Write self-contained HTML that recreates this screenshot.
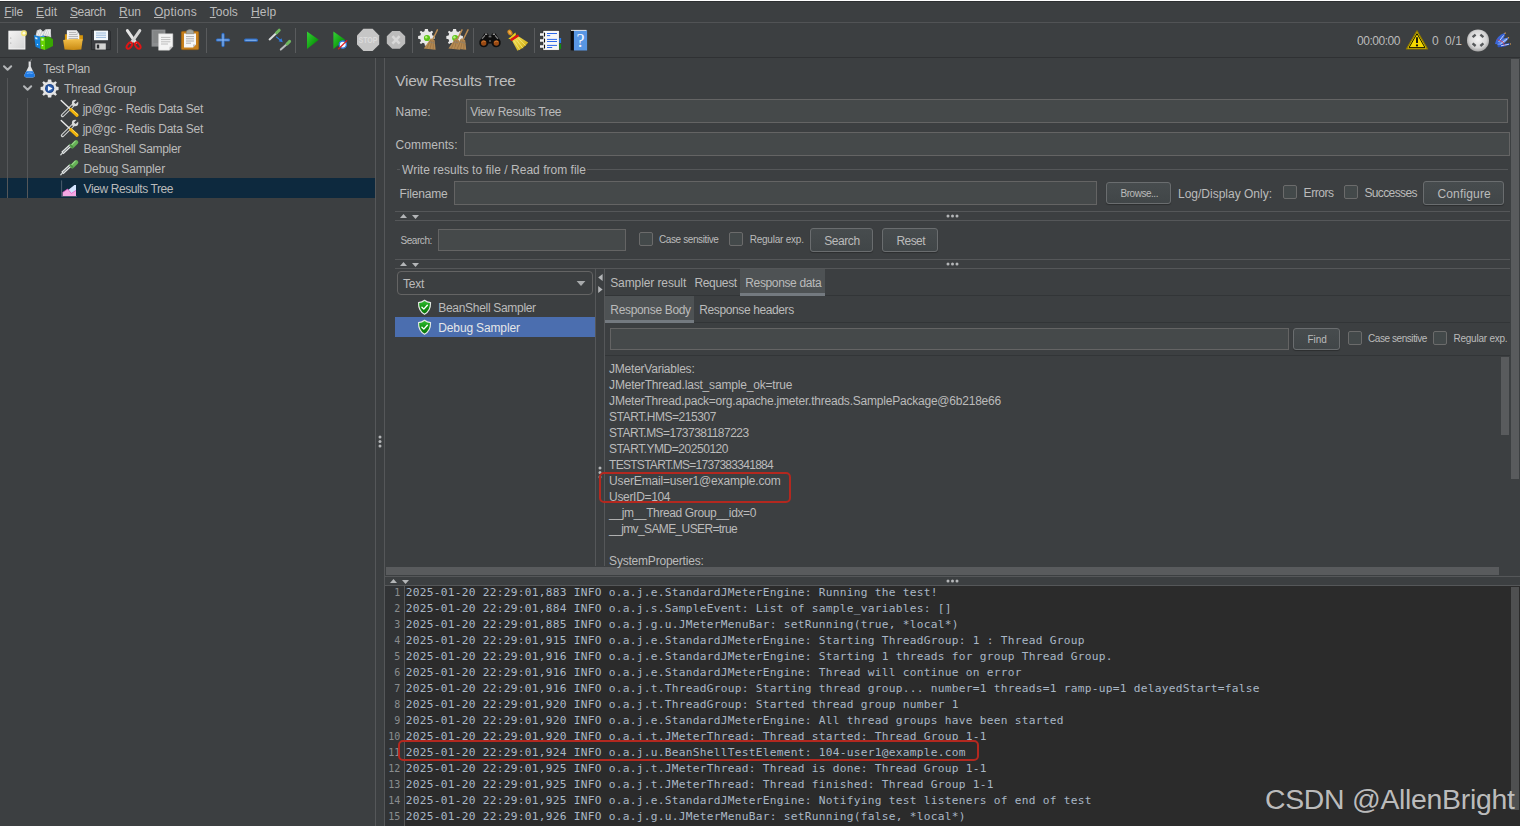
<!DOCTYPE html>
<html lang="en"><head><meta charset="utf-8"><title>Apache JMeter - View Results Tree</title>
<style>
html,body{margin:0;padding:0;}
body{width:1520px;height:826px;overflow:hidden;position:relative;background:#3c3f41;color:#bbbbbb;font-family:"Liberation Sans",sans-serif;font-size:12px;}
.a{position:absolute;}
.t{position:absolute;white-space:pre;line-height:1;}
.t u{text-decoration:underline;text-underline-offset:1px;}
svg{position:absolute;overflow:visible;}

</style></head>
<body>
<div class="a" style="left:0px;top:0px;width:1520px;height:1px;background:#ffffff;"></div>
<div class="a" style="left:0px;top:1px;width:1520px;height:1px;background:#2d2f31;"></div>
<div class="a" style="left:0px;top:22px;width:1520px;height:1px;background:#515355;"></div>
<div class="a" style="left:0px;top:57px;width:1520px;height:1px;background:#2f3133;"></div>
<div class="a" style="left:117px;top:28px;width:1px;height:25px;background:#595b5d;"></div>
<div class="a" style="left:206px;top:28px;width:1px;height:25px;background:#595b5d;"></div>
<div class="a" style="left:295px;top:28px;width:1px;height:25px;background:#595b5d;"></div>
<div class="a" style="left:412px;top:28px;width:1px;height:25px;background:#595b5d;"></div>
<div class="a" style="left:473px;top:28px;width:1px;height:25px;background:#595b5d;"></div>
<div class="a" style="left:534px;top:28px;width:1px;height:25px;background:#595b5d;"></div>
<!--ICONS-->
<div class="a" style="left:375px;top:58px;width:1px;height:768px;background:#555759;"></div>
<div class="a" style="left:384px;top:58px;width:1px;height:768px;background:#555759;"></div>
<div class="a" style="left:0px;top:178px;width:375px;height:20px;background:#0d293e;"></div>
<div class="a" style="left:7px;top:78px;width:1px;height:120px;background:#555759;"></div>
<div class="a" style="left:27px;top:98px;width:1px;height:100px;background:#555759;"></div>
<div class="a" style="left:466px;top:99px;width:1042px;height:24px;background:#45494a;border:1px solid #646464;box-sizing:border-box;"></div>
<div class="a" style="left:464px;top:132px;width:1046px;height:24px;background:#45494a;border:1px solid #646464;box-sizing:border-box;"></div>
<div class="a" style="left:397px;top:169px;width:3px;height:1px;background:#555759;"></div>
<div class="a" style="left:587px;top:169px;width:921px;height:1px;background:#555759;"></div>
<div class="a" style="left:454px;top:181px;width:643px;height:24px;background:#45494a;border:1px solid #646464;box-sizing:border-box;"></div>
<div class="a" style="left:1106px;top:182px;width:65px;height:22px;background:linear-gradient(#474c4e,#414648);border:1px solid #6a6d6f;box-sizing:border-box;border-radius:3px;box-shadow:0 1px 1px rgba(0,0,0,0.28);"></div>
<div class="a" style="left:1283px;top:185px;width:14px;height:14px;background:#43494a;border:1px solid #6b6b6b;box-sizing:border-box;border-radius:2px;"></div>
<div class="a" style="left:1344px;top:185px;width:14px;height:14px;background:#43494a;border:1px solid #6b6b6b;box-sizing:border-box;border-radius:2px;"></div>
<div class="a" style="left:1423px;top:181px;width:81px;height:24px;background:linear-gradient(#474c4e,#414648);border:1px solid #6a6d6f;box-sizing:border-box;border-radius:3px;box-shadow:0 1px 1px rgba(0,0,0,0.28);"></div>
<div class="a" style="left:1511px;top:59px;width:8px;height:420px;background:#595b5d;"></div>
<div class="a" style="left:395px;top:211px;width:1115px;height:1px;background:#555759;"></div>
<div class="a" style="left:395px;top:220px;width:1115px;height:1px;background:#555759;"></div>
<!--ARROWS1-->
<div class="a" style="left:438px;top:229px;width:188px;height:22px;background:#45494a;border:1px solid #646464;box-sizing:border-box;"></div>
<div class="a" style="left:639px;top:232px;width:14px;height:14px;background:#43494a;border:1px solid #6b6b6b;box-sizing:border-box;border-radius:2px;"></div>
<div class="a" style="left:729px;top:232px;width:14px;height:14px;background:#43494a;border:1px solid #6b6b6b;box-sizing:border-box;border-radius:2px;"></div>
<div class="a" style="left:810px;top:228px;width:63px;height:24px;background:linear-gradient(#474c4e,#414648);border:1px solid #6a6d6f;box-sizing:border-box;border-radius:3px;box-shadow:0 1px 1px rgba(0,0,0,0.28);"></div>
<div class="a" style="left:882px;top:228px;width:56px;height:24px;background:linear-gradient(#474c4e,#414648);border:1px solid #6a6d6f;box-sizing:border-box;border-radius:3px;box-shadow:0 1px 1px rgba(0,0,0,0.28);"></div>
<div class="a" style="left:395px;top:259px;width:1115px;height:1px;background:#555759;"></div>
<div class="a" style="left:395px;top:268px;width:1115px;height:1px;background:#555759;"></div>
<div class="a" style="left:397px;top:271px;width:196px;height:24px;border:1px solid #646464;box-sizing:border-box;border-radius:4px;"></div>
<div class="a" style="left:395px;top:317px;width:200px;height:20px;background:#4b6eaf;"></div>
<div class="a" style="left:595px;top:269px;width:1px;height:298px;background:#555759;"></div>
<div class="a" style="left:604px;top:269px;width:1px;height:298px;background:#555759;"></div>
<div class="a" style="left:740px;top:269px;width:85px;height:27px;background:#4e5254;"></div>
<div class="a" style="left:740px;top:293px;width:85px;height:3px;background:#747a80;"></div>
<div class="a" style="left:605px;top:295px;width:135px;height:1px;background:#323537;"></div>
<div class="a" style="left:825px;top:295px;width:685px;height:1px;background:#323537;"></div>
<div class="a" style="left:605px;top:296px;width:89px;height:27px;background:#4e5254;"></div>
<div class="a" style="left:605px;top:320px;width:89px;height:3px;background:#747a80;"></div>
<div class="a" style="left:694px;top:322px;width:816px;height:1px;background:#323537;"></div>
<div class="a" style="left:610px;top:328px;width:679px;height:22px;background:#45494a;border:1px solid #646464;box-sizing:border-box;"></div>
<div class="a" style="left:1293px;top:328px;width:47px;height:22px;background:linear-gradient(#474c4e,#414648);border:1px solid #6a6d6f;box-sizing:border-box;border-radius:3px;box-shadow:0 1px 1px rgba(0,0,0,0.28);"></div>
<div class="a" style="left:1348px;top:331px;width:14px;height:14px;background:#43494a;border:1px solid #6b6b6b;box-sizing:border-box;border-radius:2px;"></div>
<div class="a" style="left:1433px;top:331px;width:14px;height:14px;background:#43494a;border:1px solid #6b6b6b;box-sizing:border-box;border-radius:2px;"></div>
<div class="a" style="left:605px;top:355px;width:905px;height:1px;background:#323537;"></div>
<div class="a" style="left:1501px;top:357px;width:8px;height:78px;background:#595b5d;"></div>
<div class="a" style="left:385px;top:566px;width:1135px;height:10px;background:#3c3f41;"></div>
<div class="a" style="left:386px;top:567px;width:1113px;height:8px;background:#595b5d;"></div>
<div class="a" style="left:384px;top:566px;width:1px;height:20px;background:#555759;"></div>
<div class="a" style="left:599px;top:472px;width:191.5px;height:31px;border:2px solid #b3281f;border-radius:5px;box-sizing:border-box;z-index:5;"></div>
<div class="a" style="left:385px;top:576px;width:1135px;height:1px;background:#555759;"></div>
<div class="a" style="left:385px;top:585px;width:1135px;height:1px;background:#555759;"></div>
<div class="a" style="left:385px;top:586px;width:1135px;height:240px;background:#2b2b2b;"></div>
<div class="a" style="left:385px;top:586px;width:20px;height:240px;background:#313335;"></div>
<div class="a" style="left:404px;top:586px;width:1px;height:240px;background:#555555;"></div>
<div class="a" style="left:1511px;top:587px;width:8px;height:223px;background:#4f5051;"></div>
<div class="a" style="left:398px;top:740.4px;width:581.2px;height:20.4px;border:2px solid #b3281f;border-radius:5px;box-sizing:border-box;z-index:5;"></div>
<span class="t " style="left:4.3px;top:6.00px;font-size:12px;letter-spacing:-0.140px;"><u>F</u>ile</span>
<span class="t " style="left:36.1px;top:6.00px;font-size:12px;letter-spacing:0.099px;"><u>E</u>dit</span>
<span class="t " style="left:70px;top:6.00px;font-size:12px;letter-spacing:-0.405px;"><u>S</u>earch</span>
<span class="t " style="left:119px;top:6.00px;font-size:12px;letter-spacing:-0.010px;"><u>R</u>un</span>
<span class="t " style="left:154px;top:6.00px;font-size:12px;letter-spacing:0.232px;"><u>O</u>ptions</span>
<span class="t " style="left:209.8px;top:6.00px;font-size:12px;letter-spacing:-0.003px;"><u>T</u>ools</span>
<span class="t " style="left:251px;top:6.00px;font-size:12px;letter-spacing:0.153px;"><u>H</u>elp</span>
<span class="t " style="left:1357px;top:35.00px;font-size:12px;letter-spacing:-0.465px;">00:00:00</span>
<span class="t " style="left:1432px;top:35.00px;font-size:12px;letter-spacing:0.312px;">0</span>
<span class="t " style="left:1445px;top:35.00px;font-size:12px;letter-spacing:0.104px;">0/1</span>
<span class="t " style="left:43.2px;top:63.00px;font-size:12px;letter-spacing:-0.284px;">Test Plan</span>
<span class="t " style="left:64px;top:83.00px;font-size:12px;letter-spacing:-0.227px;">Thread Group</span>
<span class="t " style="left:82.7px;top:103.00px;font-size:12px;letter-spacing:-0.240px;">jp@gc - Redis Data Set</span>
<span class="t " style="left:82.7px;top:123.00px;font-size:12px;letter-spacing:-0.240px;">jp@gc - Redis Data Set</span>
<span class="t " style="left:83.6px;top:143.00px;font-size:12px;letter-spacing:-0.314px;">BeanShell Sampler</span>
<span class="t " style="left:83.6px;top:163.00px;font-size:12px;letter-spacing:-0.153px;">Debug Sampler</span>
<span class="t " style="left:83.6px;top:183.00px;font-size:12px;letter-spacing:-0.418px;">View Results Tree</span>
<span class="t " style="left:395.2px;top:73.00px;font-size:15.5px;letter-spacing:-0.244px;">View Results Tree</span>
<span class="t " style="left:395.6px;top:106.00px;font-size:12px;letter-spacing:-0.069px;">Name:</span>
<span class="t " style="left:470.2px;top:106.00px;font-size:12px;letter-spacing:-0.324px;">View Results Tree</span>
<span class="t " style="left:395.6px;top:139.00px;font-size:12px;letter-spacing:0.071px;">Comments:</span>
<span class="t " style="left:402px;top:164.00px;font-size:12px;letter-spacing:0.022px;">Write results to file / Read from file</span>
<span class="t " style="left:399.6px;top:188.00px;font-size:12px;letter-spacing:-0.170px;">Filename</span>
<span class="t " style="left:1120.5px;top:189.00px;font-size:10px;letter-spacing:-0.465px;">Browse...</span>
<span class="t " style="left:1178px;top:188.00px;font-size:12px;letter-spacing:-0.003px;">Log/Display Only:</span>
<span class="t " style="left:1303.6px;top:187.00px;font-size:12px;letter-spacing:-0.445px;">Errors</span>
<span class="t " style="left:1364.4px;top:187.00px;font-size:12px;letter-spacing:-0.615px;">Successes</span>
<span class="t " style="left:1437.4px;top:188.00px;font-size:12px;letter-spacing:0.163px;">Configure</span>
<span class="t " style="left:400.4px;top:236.00px;font-size:10px;letter-spacing:-0.424px;">Search:</span>
<span class="t " style="left:659px;top:235.00px;font-size:10px;letter-spacing:-0.395px;">Case sensitive</span>
<span class="t " style="left:749.7px;top:235.00px;font-size:10px;letter-spacing:-0.225px;">Regular exp.</span>
<span class="t " style="left:824.2px;top:235.00px;font-size:12px;letter-spacing:-0.422px;">Search</span>
<span class="t " style="left:896.5px;top:235.00px;font-size:12px;letter-spacing:-0.572px;">Reset</span>
<span class="t " style="left:403px;top:278.00px;font-size:12px;letter-spacing:-0.254px;">Text</span>
<span class="t " style="left:438.3px;top:302.00px;font-size:12px;letter-spacing:-0.308px;">BeanShell Sampler</span>
<span class="t " style="left:438.3px;top:322.00px;font-size:12px;color:#e4e6e8;letter-spacing:-0.145px;">Debug Sampler</span>
<span class="t " style="left:610.2px;top:277.00px;font-size:12px;letter-spacing:-0.098px;">Sampler result</span>
<span class="t " style="left:694.4px;top:277.00px;font-size:12px;letter-spacing:-0.315px;">Request</span>
<span class="t " style="left:745.3px;top:277.00px;font-size:12px;letter-spacing:-0.364px;">Response data</span>
<span class="t " style="left:610.3px;top:304.00px;font-size:12px;letter-spacing:-0.326px;">Response Body</span>
<span class="t " style="left:699.3px;top:304.00px;font-size:12px;letter-spacing:-0.390px;">Response headers</span>
<span class="t " style="left:1307.6px;top:335.00px;font-size:10px;letter-spacing:-0.113px;">Find</span>
<span class="t " style="left:1368px;top:334.00px;font-size:10px;letter-spacing:-0.431px;">Case sensitive</span>
<span class="t " style="left:1453.4px;top:334.00px;font-size:10px;letter-spacing:-0.225px;">Regular exp.</span>
<span class="t " style="left:609.1px;top:363.00px;font-size:12px;letter-spacing:-0.235px;">JMeterVariables:</span>
<span class="t " style="left:609.1px;top:379.00px;font-size:12px;letter-spacing:-0.187px;">JMeterThread.last_sample_ok=true</span>
<span class="t " style="left:609.1px;top:395.00px;font-size:12px;letter-spacing:-0.215px;">JMeterThread.pack=org.apache.jmeter.threads.SamplePackage@6b218e66</span>
<span class="t " style="left:609.1px;top:411.00px;font-size:12px;letter-spacing:-0.441px;">START.HMS=215307</span>
<span class="t " style="left:609.1px;top:427.00px;font-size:12px;letter-spacing:-0.528px;">START.MS=1737381187223</span>
<span class="t " style="left:609.1px;top:443.00px;font-size:12px;letter-spacing:-0.466px;">START.YMD=20250120</span>
<span class="t " style="left:609.1px;top:459.00px;font-size:12px;letter-spacing:-0.722px;">TESTSTART.MS=1737383341884</span>
<span class="t " style="left:609.1px;top:475.00px;font-size:12px;letter-spacing:-0.160px;">UserEmail=user1@example.com</span>
<span class="t " style="left:609.1px;top:491.00px;font-size:12px;letter-spacing:-0.327px;">UserID=104</span>
<span class="t " style="left:609.1px;top:507.00px;font-size:12px;letter-spacing:-0.382px;">__jm__Thread Group__idx=0</span>
<span class="t " style="left:609.1px;top:523.00px;font-size:12px;letter-spacing:-0.625px;">__jmv_SAME_USER=true</span>
<span class="t " style="left:609.1px;top:555.00px;font-size:12px;letter-spacing:-0.209px;">SystemProperties:</span>
<span class="t " style="left:405.8px;top:587.00px;font-size:11.2px;font-family:'DejaVu Sans Mono','Liberation Mono',monospace;color:#a9b7c6;letter-spacing:0.264px;">2025-01-20 22:29:01,883 INFO o.a.j.e.StandardJMeterEngine: Running the test!</span>
<span class="t " style="left:394.28000000000003px;top:588.00px;font-size:10px;font-family:'DejaVu Sans Mono','Liberation Mono',monospace;color:#8a8d8f;">1</span>
<span class="t " style="left:405.8px;top:603.00px;font-size:11.2px;font-family:'DejaVu Sans Mono','Liberation Mono',monospace;color:#a9b7c6;letter-spacing:0.264px;">2025-01-20 22:29:01,884 INFO o.a.j.s.SampleEvent: List of sample_variables: []</span>
<span class="t " style="left:394.28000000000003px;top:604.00px;font-size:10px;font-family:'DejaVu Sans Mono','Liberation Mono',monospace;color:#8a8d8f;">2</span>
<span class="t " style="left:405.8px;top:619.00px;font-size:11.2px;font-family:'DejaVu Sans Mono','Liberation Mono',monospace;color:#a9b7c6;letter-spacing:0.264px;">2025-01-20 22:29:01,885 INFO o.a.j.g.u.JMeterMenuBar: setRunning(true, *local*)</span>
<span class="t " style="left:394.28000000000003px;top:620.00px;font-size:10px;font-family:'DejaVu Sans Mono','Liberation Mono',monospace;color:#8a8d8f;">3</span>
<span class="t " style="left:405.8px;top:635.00px;font-size:11.2px;font-family:'DejaVu Sans Mono','Liberation Mono',monospace;color:#a9b7c6;letter-spacing:0.264px;">2025-01-20 22:29:01,915 INFO o.a.j.e.StandardJMeterEngine: Starting ThreadGroup: 1 : Thread Group</span>
<span class="t " style="left:394.28000000000003px;top:636.00px;font-size:10px;font-family:'DejaVu Sans Mono','Liberation Mono',monospace;color:#8a8d8f;">4</span>
<span class="t " style="left:405.8px;top:651.00px;font-size:11.2px;font-family:'DejaVu Sans Mono','Liberation Mono',monospace;color:#a9b7c6;letter-spacing:0.265px;">2025-01-20 22:29:01,916 INFO o.a.j.e.StandardJMeterEngine: Starting 1 threads for group Thread Group.</span>
<span class="t " style="left:394.28000000000003px;top:652.00px;font-size:10px;font-family:'DejaVu Sans Mono','Liberation Mono',monospace;color:#8a8d8f;">5</span>
<span class="t " style="left:405.8px;top:667.00px;font-size:11.2px;font-family:'DejaVu Sans Mono','Liberation Mono',monospace;color:#a9b7c6;letter-spacing:0.264px;">2025-01-20 22:29:01,916 INFO o.a.j.e.StandardJMeterEngine: Thread will continue on error</span>
<span class="t " style="left:394.28000000000003px;top:668.00px;font-size:10px;font-family:'DejaVu Sans Mono','Liberation Mono',monospace;color:#8a8d8f;">6</span>
<span class="t " style="left:405.8px;top:683.00px;font-size:11.2px;font-family:'DejaVu Sans Mono','Liberation Mono',monospace;color:#a9b7c6;letter-spacing:0.264px;">2025-01-20 22:29:01,916 INFO o.a.j.t.ThreadGroup: Starting thread group... number=1 threads=1 ramp-up=1 delayedStart=false</span>
<span class="t " style="left:394.28000000000003px;top:684.00px;font-size:10px;font-family:'DejaVu Sans Mono','Liberation Mono',monospace;color:#8a8d8f;">7</span>
<span class="t " style="left:405.8px;top:699.00px;font-size:11.2px;font-family:'DejaVu Sans Mono','Liberation Mono',monospace;color:#a9b7c6;letter-spacing:0.264px;">2025-01-20 22:29:01,920 INFO o.a.j.t.ThreadGroup: Started thread group number 1</span>
<span class="t " style="left:394.28000000000003px;top:700.00px;font-size:10px;font-family:'DejaVu Sans Mono','Liberation Mono',monospace;color:#8a8d8f;">8</span>
<span class="t " style="left:405.8px;top:715.00px;font-size:11.2px;font-family:'DejaVu Sans Mono','Liberation Mono',monospace;color:#a9b7c6;letter-spacing:0.264px;">2025-01-20 22:29:01,920 INFO o.a.j.e.StandardJMeterEngine: All thread groups have been started</span>
<span class="t " style="left:394.28000000000003px;top:716.00px;font-size:10px;font-family:'DejaVu Sans Mono','Liberation Mono',monospace;color:#8a8d8f;">9</span>
<span class="t " style="left:405.8px;top:731.00px;font-size:11.2px;font-family:'DejaVu Sans Mono','Liberation Mono',monospace;color:#a9b7c6;letter-spacing:0.264px;">2025-01-20 22:29:01,920 INFO o.a.j.t.JMeterThread: Thread started: Thread Group 1-1</span>
<span class="t " style="left:388.26px;top:732.00px;font-size:10px;font-family:'DejaVu Sans Mono','Liberation Mono',monospace;color:#8a8d8f;">10</span>
<span class="t " style="left:405.8px;top:747.00px;font-size:11.2px;font-family:'DejaVu Sans Mono','Liberation Mono',monospace;color:#a9b7c6;letter-spacing:0.264px;">2025-01-20 22:29:01,924 INFO o.a.j.u.BeanShellTestElement: 104-user1@example.com</span>
<span class="t " style="left:388.26px;top:748.00px;font-size:10px;font-family:'DejaVu Sans Mono','Liberation Mono',monospace;color:#8a8d8f;">11</span>
<span class="t " style="left:405.8px;top:763.00px;font-size:11.2px;font-family:'DejaVu Sans Mono','Liberation Mono',monospace;color:#a9b7c6;letter-spacing:0.264px;">2025-01-20 22:29:01,925 INFO o.a.j.t.JMeterThread: Thread is done: Thread Group 1-1</span>
<span class="t " style="left:388.26px;top:764.00px;font-size:10px;font-family:'DejaVu Sans Mono','Liberation Mono',monospace;color:#8a8d8f;">12</span>
<span class="t " style="left:405.8px;top:779.00px;font-size:11.2px;font-family:'DejaVu Sans Mono','Liberation Mono',monospace;color:#a9b7c6;letter-spacing:0.265px;">2025-01-20 22:29:01,925 INFO o.a.j.t.JMeterThread: Thread finished: Thread Group 1-1</span>
<span class="t " style="left:388.26px;top:780.00px;font-size:10px;font-family:'DejaVu Sans Mono','Liberation Mono',monospace;color:#8a8d8f;">13</span>
<span class="t " style="left:405.8px;top:795.00px;font-size:11.2px;font-family:'DejaVu Sans Mono','Liberation Mono',monospace;color:#a9b7c6;letter-spacing:0.265px;">2025-01-20 22:29:01,925 INFO o.a.j.e.StandardJMeterEngine: Notifying test listeners of end of test</span>
<span class="t " style="left:388.26px;top:796.00px;font-size:10px;font-family:'DejaVu Sans Mono','Liberation Mono',monospace;color:#8a8d8f;">14</span>
<span class="t " style="left:405.8px;top:811.00px;font-size:11.2px;font-family:'DejaVu Sans Mono','Liberation Mono',monospace;color:#a9b7c6;letter-spacing:0.264px;">2025-01-20 22:29:01,926 INFO o.a.j.g.u.JMeterMenuBar: setRunning(false, *local*)</span>
<span class="t " style="left:388.26px;top:812.00px;font-size:10px;font-family:'DejaVu Sans Mono','Liberation Mono',monospace;color:#8a8d8f;">15</span>
<span class="t wm" style="left:1265px;top:785.00px;font-size:28.4px;color:rgba(208,208,208,0.9);letter-spacing:-0.291px;">CSDN @AllenBright</span>
<svg width="1520" height="826" viewBox="0 0 1520 826" style="left:0;top:0;pointer-events:none">
<defs>
<linearGradient id="gPage" x1="0" y1="0" x2="1" y2="1"><stop offset="0" stop-color="#f4f4f4"/><stop offset="1" stop-color="#d4d4d4"/></linearGradient>
<linearGradient id="gFold" x1="0" y1="0" x2="0" y2="1"><stop offset="0" stop-color="#f3c04a"/><stop offset="1" stop-color="#c98a12"/></linearGradient>
<linearGradient id="gPlay" x1="0" y1="0" x2="1" y2="1"><stop offset="0" stop-color="#35d235"/><stop offset="0.6" stop-color="#12a012"/><stop offset="1" stop-color="#066806"/></linearGradient>
<radialGradient id="gSph" cx="0.5" cy="0.45" r="0.55"><stop offset="0" stop-color="#f4f4f4"/><stop offset="0.7" stop-color="#d6d6d6"/><stop offset="1" stop-color="#a4a4a4"/></radialGradient>
<linearGradient id="gShield" x1="0" y1="0" x2="0" y2="1"><stop offset="0" stop-color="#34c034"/><stop offset="0.5" stop-color="#149414"/><stop offset="1" stop-color="#087008"/></linearGradient>
<linearGradient id="gBlue" x1="0" y1="0" x2="0" y2="1"><stop offset="0" stop-color="#6aa6ee"/><stop offset="1" stop-color="#2d6fca"/></linearGradient>
<radialGradient id="gGearC" cx="0.5" cy="0.5" r="0.5"><stop offset="0" stop-color="#4d86d8"/><stop offset="1" stop-color="#173f86"/></radialGradient>
<linearGradient id="gBroom" x1="0" y1="0" x2="1" y2="1"><stop offset="0" stop-color="#f6e45a"/><stop offset="1" stop-color="#c9a40a"/></linearGradient>
<g id="gear"><path d="M-1.6,-9 L1.6,-9 L2.1,-6.6 L3.9,-5.9 L5.9,-7.3 L7.3,-5.9 L5.9,-3.9 L6.6,-2.1 L9,-1.6 L9,1.6 L6.6,2.1 L5.9,3.9 L7.3,5.9 L5.9,7.3 L3.9,5.9 L2.1,6.6 L1.6,9 L-1.6,9 L-2.1,6.6 L-3.9,5.9 L-5.9,7.3 L-7.3,5.9 L-5.9,3.9 L-6.6,2.1 L-9,1.6 L-9,-1.6 L-6.6,-2.1 L-5.9,-3.9 L-7.3,-5.9 L-5.9,-7.3 L-3.9,-5.9 L-2.1,-6.6 Z"/></g>
<g id="tools">
 <path d="M12.4,5.6 L1.9,15.9" stroke="#d2d4d4" stroke-width="3.3" stroke-linecap="round"/>
 <path d="M11.6,6.4 L2.2,15.6" stroke="#3c3f41" stroke-width="1.3" stroke-linecap="round"/>
 <circle cx="14.5" cy="3.4" r="3.2" fill="#d8dada"/>
 <path d="M14.2,3.7 L18.6,-0.7" stroke="#3c3f41" stroke-width="2.3"/>
 <path d="M0.6,0.9 L9.6,9.4" stroke="#ececec" stroke-width="1.4" stroke-linecap="round"/>
 <path d="M10.2,10 L16.4,15.6" stroke="#f0b20a" stroke-width="3.3" stroke-linecap="round"/>
 <path d="M11,9.4 L17,14.8" stroke="#ffdc5a" stroke-width="0.9" stroke-linecap="round"/>
</g>
<g id="pipette">
 <path d="M0.8,15.4 L2.6,13.4" stroke="#c8cccc" stroke-width="1.4" stroke-linecap="round"/>
 <path d="M2.4,13.6 L10.8,5.8" stroke="#e2e6e6" stroke-width="3.1"/>
 <path d="M3,13 L10.4,6.2" stroke="#6e7474" stroke-width="1"/>
 <path d="M12.2,6.8 L16.2,2.8" stroke="#67b257" stroke-width="4.2" stroke-linecap="round"/>
 <path d="M11.6,5.4 L15.2,1.8" stroke="#9ad88c" stroke-width="1.1" stroke-linecap="round"/>
 <path d="M10,5.2 L12.8,8" stroke="#4c9442" stroke-width="1.7" stroke-linecap="round"/>
</g>
<g id="shield">
 <path d="M6.7,0.2 C8.6,1.9 10.8,2.6 13.2,2.7 C13.3,8.6 11.2,12.9 6.7,15.3 C2.2,12.9 0.1,8.6 0.2,2.7 C2.6,2.6 4.8,1.9 6.7,0.2 Z" fill="url(#gShield)" stroke="#e4e8e4" stroke-width="1.2" stroke-linejoin="round"/>
 <path d="M3.9,7.7 L5.9,9.7 L9.7,5.5" fill="none" stroke="#ffffff" stroke-width="1.5" stroke-linecap="round" stroke-linejoin="round"/>
</g>
<g id="chev"><path d="M1,1 L4.6,4.6 L8.2,1" fill="none" stroke="#b4b6b8" stroke-width="2" stroke-linecap="round" stroke-linejoin="round"/></g>
<g id="broom1">
 <path d="M11.4,0.4 L6.4,10.6" stroke="#b98b52" stroke-width="1.5" stroke-linecap="round"/>
 <path d="M4.8,8.8 L8.6,10.8 L9.6,20.4 L-2.2,19.2 Z" fill="#b58a52"/>
 <path d="M4.6,10.6 L0.6,19.4 M6,11 L4,19.6 M7.4,11.4 L7.2,20" stroke="#8e683a" stroke-width="0.6"/>
 <path d="M3.2,12.2 L9,14" stroke="#8a8070" stroke-width="0.8"/>
</g>
</defs>
<!-- new -->
<rect x="8.9" y="31.2" width="16" height="17.8" fill="url(#gPage)" stroke="#fbfbfb" stroke-width="1"/>
<circle cx="10.8" cy="38" r="0.5" fill="#8a8a8a"/><circle cx="10.8" cy="43" r="0.5" fill="#8a8a8a"/>
<circle cx="24" cy="33.2" r="3" fill="#f4e46a" opacity="0.9"/><circle cx="24" cy="33.2" r="1.4" fill="#fffbe0"/>
<!-- templates -->
<path d="M35.4,36.6 L36.8,30.6 L40.4,29 L43,31.4 L45.6,29.2 L50.8,29 L51.2,37.6 L45,36 L40.6,36.8 Z" fill="#cfd1d3"/>
<path d="M37.2,35.4 L39,30.6 M39,35.6 L41,30.2 M41,36 L43.4,31.8 M44.4,35 L46.8,29.8 M46.6,35.4 L48.6,29.8 M48.8,36 L50,30" stroke="#f6f6f6" stroke-width="0.9"/>
<path d="M33.9,35 L40.2,36.8 L40.5,48.9 L35.6,46.8 Z" fill="#1482dc"/>
<path d="M40.2,36.8 L43.6,35.2 L45,37.2 L40.3,38.6 Z" fill="#2f9ae8"/>
<path d="M35.2,37 L37.4,37.7 L37.5,39.6 L35.4,38.9 Z" fill="#dcecfa"/>
<circle cx="37.5" cy="44.5" r="0.7" fill="#d0e6fa"/>
<path d="M40.2,36.9 L45,37.3 L45,49.9 L40.6,48.7 Z" fill="#68d402"/>
<path d="M45,37.3 L49,36.4 L53,39.2 L53,46 L45,49.9 Z" fill="#38a602"/>
<path d="M41.4,38.4 L43.6,38.6 L43.6,40.8 L41.4,40.5 Z" fill="#e6f8d4"/>
<circle cx="42.5" cy="45.5" r="0.8" fill="#f0ffe6"/>
<!-- open -->
<path d="M64.9,34.2 H70 V40.4 H64.9 Z M78.8,35.2 H82.9 V40.4 H78.8 Z" fill="#d8960a"/>
<path d="M66.9,30.3 L76.6,30.3 L79.3,33.9 L79.3,40.4 L66.9,40.4 Z" fill="#f5f5f5"/>
<path d="M76.6,30.3 L76.6,33.9 L79.3,33.9 Z" fill="#d4d4d4"/>
<path d="M69,32.4 H76 M69,34.4 H77.4 M68.6,36.4 H78 M68.6,38.4 H78" stroke="#aaaaaa" stroke-width="0.9"/>
<path d="M63.1,40 Q73,38.4 82.7,39.2 L81.3,49.6 Q73,50.3 64.6,49.5 Z" fill="url(#gFold)"/>
<!-- save -->
<path d="M91.4,30.4 L109.4,30.4 L110.4,31.6 L110.4,49.6 L91.4,49.6 Z" fill="#3a3c40" stroke="#202224" stroke-width="0.6"/>
<rect x="94" y="30.6" width="14" height="9.6" fill="#f2f7fc"/>
<path d="M96,33 h10 M96,35.2 h10 M96,37.4 h10" stroke="#8fb0d6" stroke-width="0.9"/>
<rect x="95.4" y="43.4" width="10.4" height="6.2" fill="#d4d4d4"/>
<rect x="96.8" y="44.6" width="2.4" height="3.8" fill="#2a2c30"/>
<!-- cut -->
<path d="M127.4,30.6 L135.6,42.4" stroke="#e6e6e6" stroke-width="3" stroke-linecap="round"/>
<path d="M139.8,30.6 L131.6,42.4" stroke="#d4d4d4" stroke-width="3" stroke-linecap="round"/>
<ellipse cx="129.4" cy="45.6" rx="2.1" ry="3.6" fill="none" stroke="#e01414" stroke-width="1.9" transform="rotate(38 129.4 45.6)"/>
<ellipse cx="137.8" cy="45.6" rx="2.1" ry="3.6" fill="none" stroke="#e01414" stroke-width="1.9" transform="rotate(-38 137.8 45.6)"/>
<!-- copy -->
<rect x="151.6" y="29.6" width="13.8" height="17" fill="#8c8e90"/>
<path d="M153.4,32 h10 M153.4,34 h10 M153.4,36 h10 M153.4,38 h10 M153.4,40 h10 M153.4,42 h10" stroke="#767878" stroke-width="0.7"/>
<path d="M158.6,33.8 L172.8,33.8 L172.8,46.6 L169.4,50.2 L158.6,50.2 Z" fill="#f4f4f4" stroke="#d0d0d0" stroke-width="0.5"/>
<path d="M161,37.4 h9.4 M161,39.6 h9.4 M161,41.8 h9.4 M161,44 h7" stroke="#b0b0b0" stroke-width="0.8"/>
<path d="M169.4,50.2 L169.6,46.8 L172.8,46.6 Z" fill="#c4c4c4"/>
<!-- paste -->
<rect x="181.4" y="31.4" width="17.2" height="18.2" rx="1.2" fill="#c77f1a" stroke="#a8680e" stroke-width="0.7"/>
<path d="M184,33.6 L196,33.6 L196,44.4 L193,47.6 L184,47.6 Z" fill="#f6f6f6"/>
<path d="M186,36.6 h8 M186,38.8 h8 M186,41 h8 M186,43.2 h5" stroke="#9a9a9a" stroke-width="0.8"/>
<path d="M193,47.6 L193,44.6 L196,44.4 Z" fill="#c0c0c0"/>
<path d="M186,33.8 L186.8,30.6 Q190,28.4 193.2,30.6 L194,33.8 Z" fill="#a4a69e" stroke="#7e8078" stroke-width="0.5"/>
<!-- plus / minus -->
<path d="M223,34.4 V45.6 M217.4,40 H228.6" stroke="#2f6fc8" stroke-width="3.2" stroke-linecap="round"/>
<path d="M223,34.6 V45.4 M217.6,40 H228.4" stroke="#8fbaf0" stroke-width="1.1" stroke-linecap="round"/>
<path d="M245.6,40.2 H256.4" stroke="#2f6fc8" stroke-width="3.2" stroke-linecap="round"/>
<path d="M245.8,40.2 H256.2" stroke="#8fbaf0" stroke-width="1.1" stroke-linecap="round"/>
<!-- toggle -->
<path d="M269.6,39.4 L277,32.4" stroke="#d8dcdc" stroke-width="2" stroke-linecap="round"/>
<path d="M276.6,32.8 L279.2,30.2" stroke="#6fb85f" stroke-width="3" stroke-linecap="round"/>
<path d="M280.8,49.6 L287.6,43.4" stroke="#b8bcbc" stroke-width="2" stroke-linecap="round"/>
<path d="M287,44 L289.6,41.4" stroke="#6fb85f" stroke-width="3" stroke-linecap="round"/>
<path d="M276.2,36.8 L280.6,40.4" stroke="#2f7be0" stroke-width="1.1"/>
<path d="M282.8,42.2 L278.6,41.2 L281.4,38.2 Z" fill="#2f7be0"/>
<!-- start -->
<path d="M307,31.4 L318.8,39.8 L307,49 Z" fill="url(#gPlay)"/>
<path d="M333.4,31.4 L345.2,39.8 L333.4,49 Z" fill="url(#gPlay)"/>
<circle cx="342.8" cy="44.6" r="3.6" fill="#f4f8ff" stroke="#2f78d8" stroke-width="1.3"/>
<path d="M338.2,49.2 L347.2,40.4" stroke="#e01818" stroke-width="1.3"/>
<!-- stop -->
<path d="M363.4,28.8 L372.6,28.8 L379.2,35.4 L379.2,44.6 L372.6,51 L363.4,51 L357,44.6 L357,35.4 Z" fill="#c6c6c6"/>
<text x="368" y="43.2" font-family="'Liberation Sans',sans-serif" font-weight="bold" font-size="8.6" fill="#dcdcdc" text-anchor="middle" textLength="19" lengthAdjust="spacingAndGlyphs">STOP</text>
<path d="M392.2,31 L399.8,31 L405.2,36.2 L405.2,43.6 L399.8,48.8 L392.2,48.8 L386.8,43.6 L386.8,36.2 Z" fill="#bcbcbc"/>
<path d="M392.4,36.2 L399.6,43.6 M399.6,36.2 L392.4,43.6" stroke="#d8d8d8" stroke-width="2.6"/>
<!-- clear -->
<use href="#gear" transform="translate(426.4,37.4) scale(0.92)" fill="#e8e8e8"/>
<circle cx="427" cy="38" r="3.1" fill="#5ec41a"/><circle cx="426.2" cy="37.2" r="1.2" fill="#b4f07a"/>
<use href="#broom1" transform="translate(426,29.4)"/>
<!-- clear all -->
<use href="#gear" transform="translate(454.6,37.4) scale(0.92)" fill="#e8e8e8"/>
<circle cx="455.2" cy="38" r="3.1" fill="#5ec41a"/><circle cx="454.4" cy="37.2" r="1.2" fill="#b4f07a"/>
<use href="#broom1" transform="translate(450.6,29.4)"/>
<use href="#broom1" transform="translate(456.6,29.4)"/>
<!-- binoculars -->
<path d="M484.6,33.2 L487.8,33.2 L489.2,36.4 L490.8,36.4 L492.2,33.2 L495.4,33.2 L500.6,41 Q501.4,47 496.2,47.2 Q492.4,47 491.6,43.4 L488.4,43.4 Q487.6,47 483.8,47.2 Q478.6,47 479.4,41 Z" fill="#0e0e0e"/>
<path d="M485,34.2 L487.2,34.2 M492.8,34.2 L495,34.2" stroke="#d0d0d0" stroke-width="1"/>
<path d="M482.4,38.4 L484.6,35.8 M497.6,38.4 L495.4,35.8" stroke="#7e7e7e" stroke-width="1.3" stroke-linecap="round"/>
<path d="M488.6,36.8 h2.8" stroke="#8a8a8a" stroke-width="1"/>
<path d="M489,41 h2" stroke="#5a5a5a" stroke-width="1.4"/>
<circle cx="483.7" cy="43" r="2.7" fill="#9a4a14"/><circle cx="496.3" cy="43" r="2.7" fill="#9a4a14"/>
<path d="M481.6,42.4 Q483.4,40.4 485.6,41.6 M494.2,42.4 Q496,40.4 498.2,41.6" stroke="#d07a30" stroke-width="0.9" fill="none"/>
<!-- broom -->
<path d="M512,40.6 L517.4,50.8 Q523.6,48.6 528.2,42.6 L518.4,36.2 Z" fill="url(#gBroom)"/>
<path d="M514.2,41.2 L519.8,49.8 M516.4,39.8 L522.8,48.2 M518.4,38.2 L525.6,45.6" stroke="#f6ee8a" stroke-width="0.7"/>
<path d="M508.2,38.4 Q510.4,37.8 512.6,35 L515.4,32.4 Q516.4,34.6 515.6,35.6 L511.4,39.8 Z" fill="#e6cf1c"/>
<path d="M511.6,39.6 L517.6,35.8" stroke="#dc1414" stroke-width="2.5" stroke-linecap="round"/>
<ellipse cx="510" cy="32.6" rx="2.3" ry="3.1" transform="rotate(-32 510 32.6)" fill="#cf861a"/>
<ellipse cx="509.8" cy="32.4" rx="1" ry="1.8" transform="rotate(-32 509.8 32.4)" fill="#ecae54"/>
<!-- function helper -->
<rect x="543" y="30.6" width="16.2" height="19.6" fill="#f6f6f6" stroke="#1e1e1e" stroke-width="0.5"/>
<path d="M547,33.5 h10 M547,35.6 h3.2 M547,39.4 h10 M547,41.5 h10 M547,45.4 h10 M547,47.5 h5.2" stroke="#2a66ea" stroke-width="1"/>
<path d="M540,34.5 h4 M540,40.5 h4 M540,46.5 h4" stroke="#f2f2f2" stroke-width="2.6"/>
<path d="M544.5,33 v3 M544.5,39 v3 M544.5,45 v3" stroke="#111111" stroke-width="1.1" stroke-linecap="round"/>
<rect x="559.3" y="38" width="1.8" height="5" fill="#2a7be8"/><rect x="559.3" y="44" width="1.8" height="5" fill="#128a12"/>
<!-- help -->
<path d="M570.7,30.2 L574.2,30 L574.2,50.5 L570.7,50.3 Z" fill="#0c0c0e"/>
<path d="M573.9,30.3 L587.1,30.3 L587.1,50.5 L573.9,50.5 Z" fill="#5896e4"/>
<path d="M571,30.4 h15.4" stroke="#f4f4f4" stroke-width="0.9"/>
<text x="580.6" y="47" font-family="'Liberation Serif',serif" font-size="18" fill="#f6faff" text-anchor="middle">?</text>
<!-- warning -->
<path d="M1417,30.8 L1427.6,49 L1406.4,49 Z" fill="#f6da00" stroke="#8a7400" stroke-width="1.2" stroke-linejoin="round"/>
<path d="M1417,33.6 L1425,47.6 L1409,47.6 Z" fill="none" stroke="#1a1a00" stroke-width="1" stroke-linejoin="round"/>
<path d="M1417,37.2 V43" stroke="#111" stroke-width="1.9"/><circle cx="1417" cy="45.4" r="1.1" fill="#111"/>
<!-- sphere -->
<circle cx="1478" cy="40.4" r="11" fill="url(#gSph)"/>
<path d="M1472.6,37.2 L1475.6,34.6 M1480.4,34.6 L1483.4,37.2 M1472.6,43.4 L1475.6,46 M1480.4,46 L1483.4,43.4" stroke="#55585a" stroke-width="2.4"/>
<!-- feather -->
<path d="M1495,44 Q1496,36 1505.4,32.6 Q1504.6,39 1499,44.6 Z" fill="#3a66d8"/>
<path d="M1497,45 Q1501,38.6 1509,37.2 Q1506.6,42.6 1499.6,46 Z" fill="#5a86ec"/>
<path d="M1497.4,46 Q1504,42.4 1511.4,43.6 Q1506,47.4 1498,47.2 Z" fill="#2a52c4"/>
<path d="M1498.6,42 L1503.6,35.4 M1500.4,44 L1507,39 M1501,45.8 L1509,44.2" stroke="#e8eeff" stroke-width="0.8"/>
<path d="M1504.6,33.6 l1,-0.8 M1508,38 l1,-0.5 M1510,44 l1,0" stroke="#f0a030" stroke-width="1.2"/>
<path d="M1497.4,39.6 L1502.6,41.6 L1504.6,45.4" stroke="#e03030" stroke-width="0.7" fill="none"/>
<!-- tree -->
<use href="#chev" transform="translate(3,65.2)"/>
<use href="#chev" transform="translate(23,85.2)"/>
<path d="M28.6,61.4 L30.8,61.4 L30.8,66.6 L34.8,75 Q35,77.4 32.6,77.4 L26.6,77.4 Q24.2,77.4 24.4,75 L28.6,66.6 Z" fill="#e0e2e4"/>
<path d="M26.4,71.2 L33,71.2 L34.8,75 Q35,77.4 32.6,77.4 L26.6,77.4 Q24.2,77.4 24.4,75 Z" fill="#1e7ae4"/>
<path d="M26.8,73.4 Q29.6,72.4 32.6,73.4" stroke="#8cc0ff" stroke-width="0.8" fill="none"/>
<path d="M30.6,61.4 L31.4,59.4" stroke="#9a9c9e" stroke-width="0.8"/>
<use href="#gear" transform="translate(49.6,88.5)" fill="#e4e4e4"/>
<circle cx="49.6" cy="88.5" r="4.6" fill="url(#gGearC)"/>
<path d="M48,86 L52.6,88.5 L48,91 Z" fill="#f4f8ff"/>
<use href="#tools" transform="translate(60.6,99.6)"/>
<use href="#tools" transform="translate(60.6,119.6)"/>
<use href="#pipette" transform="translate(60,139.4)"/>
<use href="#pipette" transform="translate(60,159.4)"/>
<path d="M61.6,180.4 V196.4 H77" stroke="#5a6a7a" stroke-width="0.8" fill="none"/>
<path d="M67.6,190.6 L74.4,185 L76,185 L76,196 L67.6,196 Z" fill="#d4e4ff"/>
<path d="M62.6,196 L62.6,192.4 L67.6,189 L71.4,193.4 L76,190.4 L76,196 Z" fill="#f4a8e4"/>
<path d="M62.6,192.4 L67.6,189 L71.4,193.4 L76,190.4" stroke="#e050c0" stroke-width="0.7" fill="none"/>
<!-- result tree shields -->
<use href="#shield" transform="translate(418.3,300.1) scale(0.93)"/>
<use href="#shield" transform="translate(418.3,320.1) scale(0.93)"/>
<!-- combo arrow -->
<path d="M576.6,281 L585.4,281 L581,286 Z" fill="#a8aaac"/>
<!-- splitter arrows -->
<g fill="#b4b6b8">
<path d="M400,218 L407,218 L403.5,214 Z"/><path d="M412,215 L419,215 L415.5,219 Z"/>
<path d="M400,266 L407,266 L403.5,262 Z"/><path d="M412,263 L419,263 L415.5,267 Z"/>
<path d="M390,583 L397,583 L393.5,579 Z"/><path d="M402,580 L409,580 L405.5,584 Z"/>
<path d="M602.6,274 L602.6,281 L598.2,277.5 Z"/><path d="M598.2,286 L598.2,293 L602.6,289.5 Z"/>
<circle cx="948" cy="216" r="1.5"/><circle cx="952.5" cy="216" r="1.5"/><circle cx="957" cy="216" r="1.5"/>
<circle cx="948" cy="264" r="1.5"/><circle cx="952.5" cy="264" r="1.5"/><circle cx="957" cy="264" r="1.5"/>
<circle cx="948" cy="581" r="1.5"/><circle cx="952.5" cy="581" r="1.5"/><circle cx="957" cy="581" r="1.5"/>
<circle cx="380" cy="437" r="1.5"/><circle cx="380" cy="441.5" r="1.5"/><circle cx="380" cy="446" r="1.5"/>
<circle cx="600" cy="468" r="1.5"/><circle cx="600" cy="472.5" r="1.5"/><circle cx="600" cy="477" r="1.5"/>
</g>
</svg>

</body></html>
